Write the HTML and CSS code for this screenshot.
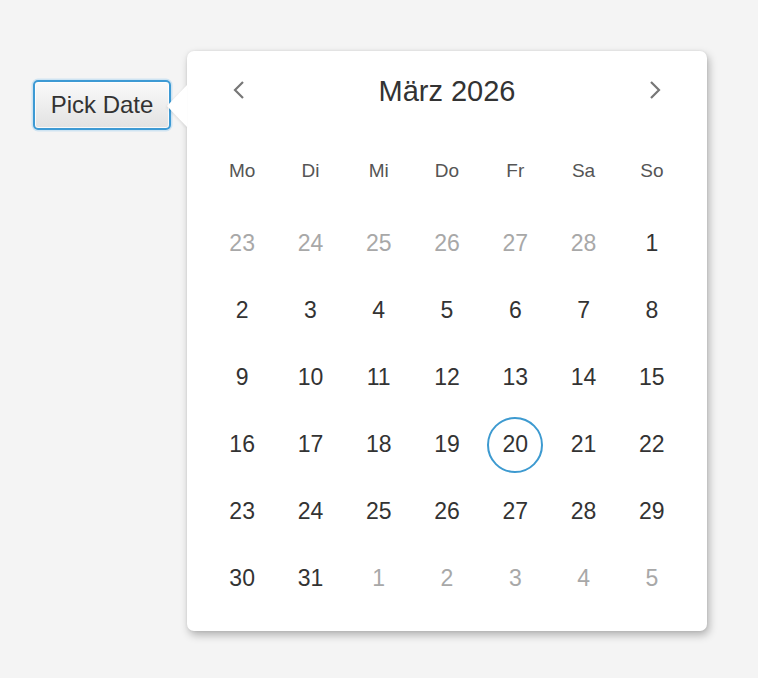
FILE: index.html
```html
<!DOCTYPE html>
<html lang="de">
<head>
<meta charset="utf-8">
<link rel="stylesheet" href="styles.css">
</head>
<body>
<div class="stage">
  <button class="pick">Pick Date</button>
  <div class="popup">
    <div class="arrow"></div>
    <div class="header">
      <span class="nav"><svg width="14" height="20" viewBox="0 0 14 20"><polyline points="11,2 3,10 11,18" fill="none" stroke="#777" stroke-width="2.2"/></svg></span>
      <span class="title">März 2026</span>
      <span class="nav"><svg width="14" height="20" viewBox="0 0 14 20"><polyline points="3,2 11,10 3,18" fill="none" stroke="#777" stroke-width="2.2"/></svg></span>
    </div>
    <div class="grid">
      <div class="dn">Mo</div><div class="dn">Di</div><div class="dn">Mi</div><div class="dn">Do</div><div class="dn">Fr</div><div class="dn">Sa</div><div class="dn">So</div>
      <div class="d o">23</div><div class="d o">24</div><div class="d o">25</div><div class="d o">26</div><div class="d o">27</div><div class="d o">28</div><div class="d">1</div>
      <div class="d">2</div><div class="d">3</div><div class="d">4</div><div class="d">5</div><div class="d">6</div><div class="d">7</div><div class="d">8</div>
      <div class="d">9</div><div class="d">10</div><div class="d">11</div><div class="d">12</div><div class="d">13</div><div class="d">14</div><div class="d">15</div>
      <div class="d">16</div><div class="d">17</div><div class="d">18</div><div class="d">19</div><div class="d"><span class="sel">20</span></div><div class="d">21</div><div class="d">22</div>
      <div class="d">23</div><div class="d">24</div><div class="d">25</div><div class="d">26</div><div class="d">27</div><div class="d">28</div><div class="d">29</div>
      <div class="d">30</div><div class="d">31</div><div class="d o">1</div><div class="d o">2</div><div class="d o">3</div><div class="d o">4</div><div class="d o">5</div>
    </div>
  </div>
</div>
</body>
</html>
```
FILE: styles.css
```css
html, body {
  margin: 0;
  padding: 0;
  background: #f4f4f4;
  width: 758px;
  height: 678px;
  overflow: hidden;
  font-family: "Liberation Sans", Arial, sans-serif;
  color: #333;
}
.stage {
  display: flex;
  align-items: flex-start;
  padding: 51px 0 0 33px;
  gap: 16px;
}
.pick {
  margin-top: 29px;
  width: 138px;
  height: 50px;
  box-sizing: border-box;
  border: 2px solid #3d9ad4;
  border-radius: 5px;
  box-shadow: 0 0 0 1.5px #cfe4f2, inset 0 0 0 1px rgba(255,255,255,0.8);
  background: linear-gradient(#fafafa, #e2e2e2);
  font-family: inherit;
  font-size: 24px;
  color: #333;
  padding: 0;
}
.popup {
  position: relative;
  width: 520px;
  height: 580px;
  box-sizing: border-box;
  background: #fff;
  border-radius: 7px;
  box-shadow: 2px 4px 9px rgba(0,0,0,0.28), 0 0 3px rgba(0,0,0,0.08);
  padding: 0 21px 19px;
}
.arrow {
  position: absolute;
  left: -20px;
  top: 34px;
  width: 0;
  height: 0;
  border-top: 21px solid transparent;
  border-bottom: 21px solid transparent;
  border-right: 20px solid #fff;
  filter: drop-shadow(-1px 1px 1px rgba(0,0,0,0.08));
}
.header {
  height: 78px;
  display: flex;
  align-items: center;
  justify-content: space-between;
  padding: 0 24px;
}
.nav {
  display: flex;
  width: 14px;
  height: 20px;
}
.title {
  font-size: 29px;
  color: #333;
  margin-top: 2px;
}
.grid {
  display: grid;
  grid-template-columns: repeat(7, 1fr);
  grid-template-rows: 81px repeat(6, 67px);
}
.dn {
  display: flex;
  align-items: center;
  justify-content: center;
  font-size: 19px;
  color: #555;
  padding-top: 3px;
}
.d {
  display: flex;
  align-items: center;
  justify-content: center;
  font-size: 23px;
  color: #333;
}
.d.o {
  color: #a8a8a8;
}
.sel {
  display: flex;
  align-items: center;
  justify-content: center;
  width: 56px;
  height: 56px;
  box-sizing: border-box;
  border: 2px solid #3d9ad0;
  border-radius: 50%;
}
```
